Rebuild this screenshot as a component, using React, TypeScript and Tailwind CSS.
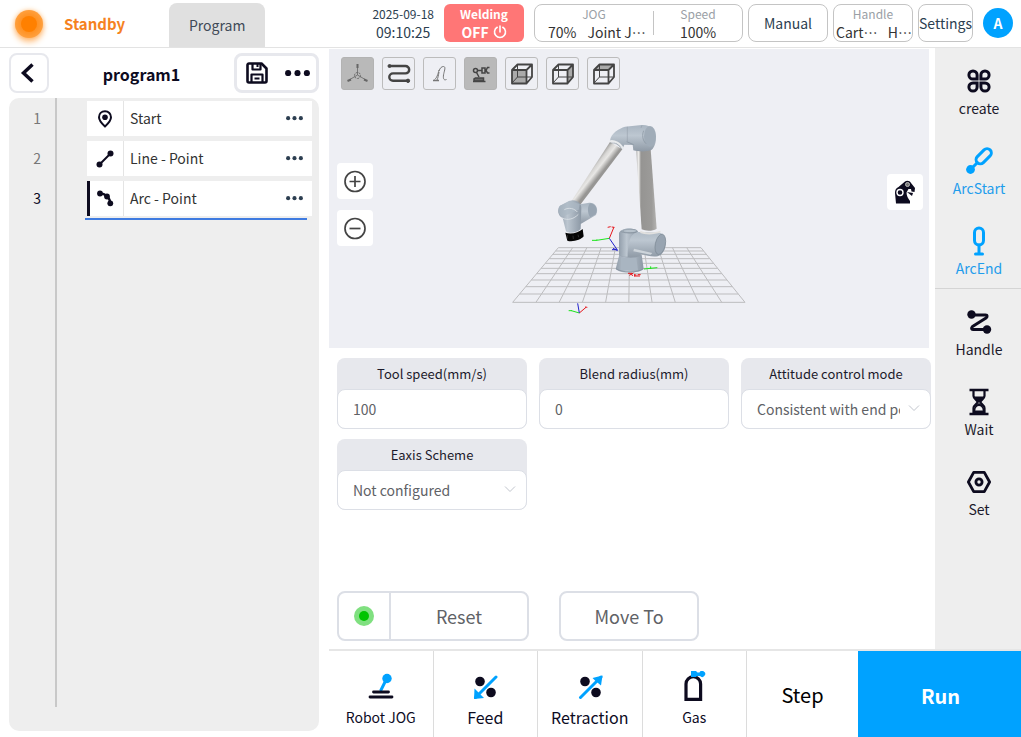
import type { ReactNode } from "react";

const INK = "#0d0b1f";
const BLUE = "#00a2ff";

const steps = [
  { id: 1, name: "Start", icon: <PinIcon />, active: false },
  { id: 2, name: "Line - Point", icon: <LineIcon />, active: false },
  { id: 3, name: "Arc - Point", icon: <ArcIcon />, active: true },
];

const viewTools = [
  { label: "Axes", icon: <AxesIcon />, active: true },
  { label: "Path", icon: <PathIcon />, active: false },
  { label: "Trace", icon: <TraceIcon />, active: false },
  { label: "Model", icon: <ArmIcon />, active: true },
  { label: "Front view", icon: <CubeIcon face="front" />, active: false },
  { label: "Right view", icon: <CubeIcon face="right" />, active: false },
  { label: "Top view", icon: <CubeIcon face="top" />, active: false },
];

function PinIcon() {
  return (
    <svg width="16" height="18" viewBox="0 0 16 18" fill="none">
      <path d="M8 1.3c-3.5 0-6 2.6-6 6 0 3.600 3 6.500 6 9.200 3-2.700 6-5.600 6-9.200 0-3.400-2.500-6-6-6z" stroke={INK} strokeWidth="2" />
      <circle cx="8" cy="7.300" r="2.800" fill={INK} />
    </svg>
  );
}

function LineIcon() {
  return (
    <svg width="18" height="18" viewBox="0 0 18 18">
      <path d="M3.500 14.500 14.500 3.500" stroke={INK} strokeWidth="2" />
      <circle cx="3.500" cy="14.500" r="3" fill={INK} />
      <circle cx="14.500" cy="3.500" r="3" fill={INK} />
    </svg>
  );
}

function ArcIcon() {
  return (
    <svg width="18" height="18" viewBox="0 0 18 18" fill="none">
      <path d="M4 3.500C9 3.500 14 7 14.300 13.500" stroke={INK} strokeWidth="2.500" />
      <circle cx="4" cy="3.500" r="2.900" fill={INK} />
      <circle cx="11" cy="6.500" r="2.900" fill={INK} />
      <circle cx="14.300" cy="13.300" r="2.900" fill={INK} />
    </svg>
  );
}

function DotsIcon({ size, color }: { size: number; color: string }) {
  return (
    <svg width={size} height={size / 4} viewBox="0 0 24 6" fill={color}>
      <circle cx="3" cy="3" r="2.900" />
      <circle cx="12" cy="3" r="2.900" />
      <circle cx="21" cy="3" r="2.900" />
    </svg>
  );
}

function SaveIcon() {
  return (
    <svg width="22" height="22" viewBox="0 0 22 22" fill="none" stroke={INK} strokeWidth="2.600" strokeLinejoin="round">
      <path d="M3 1.500h12.500l5 5V19a1.500 1.500 0 0 1-1.500 1.500H3A1.500 1.500 0 0 1 1.500 19V3A1.500 1.500 0 0 1 3 1.500z" />
      <path d="M6.500 1.500v6h8v-6M5.500 20.500v-8h11v8" strokeWidth="2.200" />
      <path d="M11.500 2v3M8.500 16.500h5" strokeWidth="2" />
    </svg>
  );
}

function AxesIcon() {
  return (
    <svg width="23" height="23" viewBox="0 0 23 23" fill="none" stroke="#666" strokeWidth="1">
      <path d="M11.500 13V4M11.500 13 3 18M11.500 13l8.500 5" strokeWidth=".8" />
      <circle cx="11.500" cy="13.500" r="3" strokeDasharray="2 1" />
      <path d="M11.500 2v4M1.500 19l3.500-1.500M21.500 19 18 17.500" strokeWidth="2" />
    </svg>
  );
}

function PathIcon() {
  return (
    <svg width="24" height="21" viewBox="0 0 24 21" fill="none" stroke="#444" strokeWidth="2.400">
      <path d="M3 3h15.500a3.700 3.700 0 0 1 0 7.400H6a3.700 3.700 0 0 0 0 7.400h15" />
      <circle cx="2.500" cy="3" r="1.500" fill="#444" strokeWidth="1" />
      <circle cx="21" cy="17.800" r="1.700" fill="#444" strokeWidth="1" />
    </svg>
  );
}

function TraceIcon() {
  return (
    <svg width="18" height="18" viewBox="0 0 18 18" fill="none" stroke="#777" strokeWidth="1">
      <path d="M2 15.500h6" strokeWidth="1.500" />
      <path d="M3.500 14.500c2-1 3.500-5 4.500-9.500M6 15c1-2 1.500-5 2-8" />
      <path d="M8 6c1-3 2.500-4.500 4.500-4.500 2.500 0 1 4 .3 7-.8 3.500-.8 7.500 2.700 6" />
    </svg>
  );
}

function ArmIcon() {
  return (
    <svg width="18" height="18" viewBox="0 0 18 18" fill="none" stroke="#444" strokeWidth="1.500">
      <circle cx="3.500" cy="5.500" r="2" />
      <path d="M5.500 5.500H10M4.500 7.500 7 12" />
      <path d="M10 3v5h3V3zM17.500 2.500h-2l-1.500 3 1.500 2.500h2" />
      <path d="M3.500 13h8v3H2v-2z" fill="#666" />
      <path d="M1 16.500h12.500" />
    </svg>
  );
}

function CubeIcon({ face }: { face: "front" | "right" | "top" }) {
  const faces = {
    front: "M2 8h14.500v13H2z",
    right: "M16.500 8 22 2.500V15l-5.500 6z",
    top: "M2 8l5.500-5.500H22L16.500 8z",
  };
  return (
    <svg width="24" height="24" viewBox="0 0 24 24" fill="none" stroke="#444" strokeWidth="1.800" strokeLinejoin="round">
      <path d={faces[face]} fill="#aaa" stroke="none" />
      <path d="M2 21 7.500 15H22M7.500 15V2.500" strokeWidth="1" />
      <path d="M2 8h14.500v13.500H2zM2 8l5.500-5.500H22L16.500 8M22 2.500V15l-5.500 6.500" />
    </svg>
  );
}

function CreateIcon() {
  return (
    <svg width="24" height="24" viewBox="0 0 24 24" fill="none" stroke={INK} strokeWidth="3">
      <path d="M10.100 10.100V6A4.100 4.100 0 1 0 6 10.100zM13.900 10.100V6A4.100 4.100 0 1 1 18 10.100zM10.100 13.900V18A4.100 4.100 0 1 1 6 13.900zM13.900 13.900V18A4.100 4.100 0 1 0 18 13.900z" />
    </svg>
  );
}

function ArcStartIcon() {
  return (
    <svg width="28" height="28" viewBox="0 0 28 28" fill="none" stroke={BLUE} strokeWidth="3">
      <rect x="9.700" y="5" width="18" height="8.500" rx="4.250" transform="rotate(-45 18.700 9.250)" />
      <path d="M6 22l7-7" />
      <circle cx="5.500" cy="22.500" r="4.400" fill={BLUE} stroke="none" />
    </svg>
  );
}

function ArcEndIcon() {
  return (
    <svg width="14" height="30" viewBox="0 0 14 30" fill="none" stroke={BLUE} strokeWidth="3" strokeLinecap="round">
      <rect x="2.500" y="2" width="9" height="17" rx="4.500" />
      <path d="M7 19v8M3.500 28h7" />
    </svg>
  );
}

function HandleIcon() {
  return (
    <svg width="26" height="26" viewBox="0 0 26 26" fill="none" stroke={INK} strokeWidth="3" strokeLinejoin="round">
      <path d="M5 6h14.500c2 0 2 2 .5 3L6.500 17.500C5 19 5.500 20.500 7 20.500h14" />
      <circle cx="5.500" cy="5.500" r="4.200" fill={INK} stroke="none" />
      <circle cx="21" cy="20.500" r="4.200" fill={INK} stroke="none" />
    </svg>
  );
}

function WaitIcon() {
  return (
    <svg width="20" height="28" viewBox="0 0 20 28" fill="none" stroke={INK} strokeWidth="2.200">
      <path d="M.5 2h19M.5 26h19" strokeWidth="2.600" />
      <path d="M4.500 3v5c0 3 4 4 4 6s-4 3-4 6v5M15.500 3v5c0 3-4 4-4 6s4 3 4 6v5" />
      <path d="M4.500 8.500h11c-.5 3-3.500 3.500-4 6h-3C8 12 5 11.500 4.500 8.500zM4 26v-4l3-5 3-2 3 2 3 5v4z" fill={INK} stroke="none" />
      <path d="M6.300 22.500c0-6 7.400-6 7.400 0z" fill="#eee" stroke="none" />
    </svg>
  );
}

function SetIcon() {
  return (
    <svg width="24" height="24" viewBox="0 0 24 24" fill="none" stroke={INK} strokeWidth="2.800" strokeLinejoin="round">
      <path d="M6.700 2.300h10.600L22.600 12l-5.300 9.700H6.700L1.400 12z" />
      <circle cx="12" cy="12" r="3.100" />
    </svg>
  );
}

function JogIcon() {
  return (
    <svg width="28" height="28" viewBox="0 0 28 28" fill="none" strokeLinecap="round">
      <path d="M18.500 8 14 17" stroke={BLUE} strokeWidth="3" />
      <circle cx="20" cy="5.500" r="4.700" fill={BLUE} />
      <path d="M6.500 19h15M3 24h22" stroke={INK} strokeWidth="2.800" />
    </svg>
  );
}

function WireIcon({ out }: { out?: boolean }) {
  return (
    <svg width="26" height="26" viewBox="0 0 26 26" strokeLinecap="round">
      <circle cx="8" cy="7.500" r="4.800" fill={INK} />
      <circle cx="19" cy="18.500" r="4.800" fill={INK} />
      <path d="M3.500 23.500 24 3" stroke={BLUE} strokeWidth="3" />
      {out ? (
        <path d="m15.500 4 10-2.500-1.500 10-3-2.500-3-2.500z" fill={BLUE} />
      ) : (
        <path d="m2 25 .5-10.500 3 3L9 21l3 3z" fill={BLUE} />
      )}
    </svg>
  );
}

function GasIcon() {
  return (
    <svg width="24" height="32" viewBox="0 0 24 32" fill="none">
      <path d="M4 28.300V13a7.300 7.300 0 0 1 14.600 0v15.300z" stroke={INK} strokeWidth="3.200" />
      <path d="M9 0h5l1.500 1.500h2A3 3 0 1 1 18 5h-3l-1 1H9z" fill={BLUE} />
    </svg>
  );
}

function TorchIcon() {
  return (
    <svg width="22" height="24" viewBox="0 0 22 24">
      <path d="M2 23.500 1 13c0-3 1-5 3.500-6L11 1.500c2-1.500 5-.5 6 1.500l4 5-.5 4-3-.5-.5-2.500-2.500 0-2 3.500c0 3 1.500 6 3.500 8.500v2.500z" fill={INK} />
      <path d="m13 12 6 1-1 3z" fill={INK} />
      <circle cx="6" cy="12.500" r="3" fill={INK} stroke="#fff" strokeWidth="1.400" />
      <circle cx="13.500" cy="4.500" r="2" fill="#777" stroke="#bbb" />
    </svg>
  );
}

function PowerIcon() {
  return (
    <svg width="14" height="14" viewBox="0 0 14 14" fill="none" stroke="#fff" strokeWidth="1.600" strokeLinecap="round">
      <path d="M7 1v6M4.200 2.300a5.500 5.500 0 1 0 5.600 0" />
    </svg>
  );
}

function ZoomIcon({ plus }: { plus?: boolean }) {
  return (
    <svg width="24" height="24" viewBox="0 0 24 24" fill="none" stroke="#444" strokeWidth="1.700">
      <circle cx="12" cy="12.500" r="10" />
      <path d={plus ? "M6.500 12.500h11M12 7v11" : "M6.500 12.500h11"} />
    </svg>
  );
}

const gridRows = [413, 423, 433, 446, 460, 475, 491, 510, 530, 552, 577];

function RobotScene() {
  return (
    <svg className="absolute inset-0 size-full" viewBox="0 0 600 299" role="img" aria-label="Robot model">
      <defs>
        <linearGradient id="upright" x1="408" y1="0" x2="470" y2="0" gradientUnits="userSpaceOnUse">
          <stop offset="0" stopColor="#b5b5b5" />
          <stop offset=".13" stopColor="#efeeec" />
          <stop offset=".24" stopColor="#959492" />
          <stop offset=".75" stopColor="#9c9b99" />
          <stop offset="1" stopColor="#b4b3b1" />
        </linearGradient>
        <linearGradient id="forearm" x1="268" y1="170" x2="300" y2="195" gradientUnits="userSpaceOnUse">
          <stop offset="0" stopColor="#8f8e8c" />
          <stop offset=".35" stopColor="#d6d5d3" />
          <stop offset=".6" stopColor="#e8e7e5" />
          <stop offset="1" stopColor="#979694" />
        </linearGradient>
        <linearGradient id="shell" x1="0" y1="0" x2="0" y2="1">
          <stop offset="0" stopColor="#a9b5c1" />
          <stop offset=".4" stopColor="#bdc7d1" />
          <stop offset="1" stopColor="#8e99a5" />
        </linearGradient>
        <linearGradient id="shellSide" x1="0" y1="0" x2="1" y2="0">
          <stop offset="0" stopColor="#929eab" />
          <stop offset=".4" stopColor="#bcc6d0" />
          <stop offset="1" stopColor="#8c98a5" />
        </linearGradient>
      </defs>
      <g transform="translate(171 61) scale(.33333)">
        <g stroke="#bcbcbe" strokeWidth="3">
          {gridRows.map((y) => {
            const t = (y - 413) / 164;
            return <line key={y} x1={175 - 137 * t} x2={603 + 132 * t} y1={y} y2={y} />;
          })}
          {gridRows.map((y, i) => (
            <line key={y} x1={175 + 42.8 * i} x2={38 + 69.7 * i} y1="413" y2="577" />
          ))}
        </g>
        {/* upper arm and elbow */}
        <path d="M408 118h44l18 238c-12 8-32 8-45 2z" fill="url(#upright)" />
        <path d="m330 96 37 22-125 165c-10 6-22 2-29-8z" fill="url(#forearm)" />
        <path d="M330 92c3-23 27-36 45-42l50-5c26-2 43 14 43 38 0 19-7 33-16 38-14 5-38 4-52 0l-2-16-25-1-6 14c-9-13-22-22-37-26z" fill="url(#shell)" />
        <ellipse cx="450" cy="79" rx="18" ry="31" fill="#a0acb8" />
        <path d="M431 62c-5 12-4 29 7 39m-58-6 21 9" stroke="#84909c" strokeWidth="2" fill="none" />
        <path d="M329 94c13-4 35 7 40 24" stroke="#e9ebed" strokeWidth="6" fill="none" />
        <path d="M329 100c13-4 30 4 36 18" stroke="#7f8992" strokeWidth="1.500" fill="none" />
        <path d="M382 50v44M426 46l-3 8" stroke="#8d98a4" strokeWidth="1.500" fill="none" />
        {/* wrist */}
        <path d="m240 283 24-4c19-4 30 12 27 27l-3 9-46 27-28-30z" fill="url(#shell)" />
        <path d="M270 280c-9 11-8 30 1 42l16-9c7-12 4-30-17-33z" fill="#98a5b2" />
        <path d="m180 287 28-14c18-8 38 6 36 22l-2 62c-12 12-33 15-44 7l-10-40c-15-7-17-26-8-37z" fill="url(#shellSide)" />
        <path d="m178 289 30-17 31 10-3 17-51 22c-10-8-12-22-7-32z" fill="#adb9c5" opacity=".7" />
        <path d="M187 324c16 9 36 2 48-11M193 299c14-8 31-3 39 7" stroke="#dce2e7" strokeWidth="2.500" fill="none" />
        <path d="M196 368c17 6 40 0 52-11l3 22c-6 10-35 19-49 13z" fill="#050505" />
        <path d="M202 375v11m17-9 1 10m14-13 2 8" stroke="#555" strokeWidth="1.500" />
        {/* base */}
        <path d="M358 434h67l6 43c-12 14-72 15-84 0z" fill="url(#shellSide)" />
        <path d="M363 443h46l5 38h-52z" fill="#a9b5c1" />
        <path d="M348 476c20 13 62 14 82 0" stroke="#7e8b97" strokeWidth="2" fill="none" />
        <path d="M357 370c4-18 50-19 58-4l65 2c21 8 24 47 3 66-16 11-38 3-60-1l-4 6c-16 6-48 6-62-4z" fill="url(#shell)" />
        <path d="M357 370c8-18 45-19 57-5-24 8-29 25-31 75-10 1-20 0-26-5z" fill="url(#shellSide)" />
        <ellipse cx="481" cy="403" rx="15" ry="31" transform="rotate(12 481 403)" fill="#98a4b1" stroke="#7b8793" strokeWidth="2" />
        <path d="m402 416 55 13-5 5-52-10z" fill="#cdd4da" />
        <path d="M421 362c14 7 42 7 60 0l1 5c-18 8-48 8-61 2z" fill="#e1e0de" />
        <ellipse cx="390" cy="363" rx="22" ry="5" fill="#b7c2cc" stroke="#7c8894" strokeWidth="1.500" />
        <path d="M362 364c7 5 35 8 48 1" stroke="#85919d" strokeWidth="2" fill="none" />
        {/* coordinate frames */}
        <g fill="none" strokeWidth="3">
          <path d="m328 385 14-34m-19 1 9-2m3 1 8 1M238 609l20-17m-3-1 7 1" stroke="#e5161c" />
          <path d="m328 385-38 6m-14 0h13m2-3-3 5M238 609l-24-7m-8 0h10M432 477l40-4m-20-4v8" stroke="#1be41b" />
          <path d="m328 385 22 32m-14 2h17m-14-4 14 7M238 609l-5-29" stroke="#2020cc" />
          <path d="M384 490h12m-8 6 12-7m-7 1 5 8m6-6v7m0-4h5m4-1h9m-20 4h18" stroke="#e5161c" />
        </g>
      </g>
    </svg>
  );
}

function Field({ label, id, children }: { label: string; id: string; children: ReactNode }) {
  return (
    <div className="min-w-0 rounded-lg bg-[#e7e8ed]">
      <label htmlFor={id} className="flex h-[31px] items-center justify-center text-[13px] text-[#1c1a2b]">
        {label}
      </label>
      {children}
    </div>
  );
}

function SelectField({ label, id, value }: { label: string; id: string; value: string }) {
  return (
    <Field label={label} id={id}>
      <div className="relative">
        <select id={id} className="block h-10 w-full appearance-none rounded-lg border border-[#dcdfe6] bg-white pl-[15px] pr-[30px] text-sm text-[#606266]">
          <option>{value}</option>
        </select>
        <svg className="pointer-events-none absolute right-[11px] top-4 text-[#c0c4cc]" width="12" height="7" viewBox="0 0 12 7" fill="none" stroke="currentColor">
          <path d="m1 .5 5 5 5-5" />
        </svg>
      </div>
    </Field>
  );
}

function InputField({ label, id, value }: { label: string; id: string; value: string }) {
  return (
    <Field label={label} id={id}>
      <input id={id} defaultValue={value} className="block h-10 w-full rounded-lg border border-[#dcdfe6] bg-white px-[15px] text-sm text-[#606266]" />
    </Field>
  );
}

function SideItem({ label, icon, blue }: { label: string; icon: ReactNode; blue?: boolean }) {
  return (
    <button className="flex h-20 w-full flex-col items-center pl-0.5 pt-[18px]">
      <span className="flex h-[30px] items-center">{icon}</span>
      <span className={blue ? "text-sm leading-6 text-[#1f9dec]" : "text-sm leading-6 text-[#1c1a2b]"}>{label}</span>
    </button>
  );
}

function FooterItem({ label, icon, large }: { label: string; icon: ReactNode; large?: boolean }) {
  return (
    <button className="flex flex-1 flex-col items-center border-r border-[#dcdcdc] pt-5 text-[#0d0b1f]">
      <span className="flex h-8 items-center">{icon}</span>
      <span className={large ? "text-base leading-7" : "text-sm leading-7"}>{label}</span>
    </button>
  );
}

function Header() {
  return (
    <header className="flex h-12 shrink-0 items-center border-b border-[#e3e3e3] pr-2 text-[#2c3e50]">
      <span className="ml-[15px] flex size-7 items-center justify-center rounded-full bg-[#ffa548] shadow-[0_4px_6px_#ffc58a]">
        <span className="size-4 rounded-full bg-[#ff8000] shadow-[0_0_6px_4px_#ff9020]" />
      </span>
      <span className="ml-[21px] pt-0.5 text-[15px] font-bold text-[#f5821f]">Standby</span>
      <button className="ml-11 h-11 w-24 self-end rounded-t-lg bg-[#e0e0e0] text-sm text-[#3f4a57]">Program</button>
      <div className="mb-px ml-auto flex items-center gap-[5px]">
        <div className="mr-[5px] text-center">
          <p className="text-xs leading-[18px]">2025-09-18</p>
          <p className="text-sm leading-[18px]">09:10:25</p>
        </div>
        <button className="mr-[5px] flex h-[38px] w-20 flex-col items-center rounded-md bg-[#ff7676] font-bold text-white">
          <span className="text-xs leading-5">Welding</span>
          <span className="flex items-center gap-1 text-sm leading-4">
            OFF <PowerIcon />
          </span>
        </button>
        <div className="flex h-[38px] w-[209px] items-center rounded-lg border border-[#c4c4c4] text-center">
          <button className="w-[118px]">
            <span className="block text-xs leading-[18px] text-[#9aa0a6]">JOG</span>
            <span className="flex gap-[11px] whitespace-nowrap pl-[13px] text-sm leading-[18px] text-[#333]">
              <span>70%</span>
              <span>Joint J…</span>
            </span>
          </button>
          <span className="h-6 w-px bg-[#c4c4c4]" />
          <button className="flex-1">
            <span className="block text-xs leading-[18px] text-[#9aa0a6]">Speed</span>
            <span className="block text-sm leading-[18px] text-[#333]">100%</span>
          </button>
        </div>
        <button className="h-[38px] w-20 rounded-lg border border-[#c4c4c4] text-sm">Manual</button>
        <button className="h-[38px] w-20 rounded-lg border border-[#c4c4c4]">
          <span className="block text-xs leading-[18px] text-[#9aa0a6]">Handle</span>
          <span className="flex justify-between pl-[2px] text-sm leading-[18px] text-[#333]">
            <span>Cart…</span>
            <span>H…</span>
          </span>
        </button>
        <button className="flex h-[38px] w-[55px] items-center justify-center rounded-lg border border-[#c4c4c4] text-sm">
          Settings
        </button>
        <button className="ml-[5px] size-[30px] rounded-full bg-[#00a2ff] text-sm font-bold text-white">A</button>
      </div>
    </header>
  );
}

function ProgramPanel() {
  return (
    <section className="flex w-[329px] shrink-0 flex-col pb-[6px] pl-[9px] pr-[10px] pt-[5px]">
      <div className="flex items-center justify-between">
        <button aria-label="Back" className="flex size-10 items-center justify-center rounded-lg border-2 border-[#e7e8ed]">
          <svg className="mr-1" width="14" height="20" viewBox="0 0 14 20" fill="none" stroke={INK} strokeWidth="3.500">
            <path d="M12.500 1.500 3.500 10l9 8.500" />
          </svg>
        </button>
        <h1 className="pt-0.5 text-base font-bold text-[#0d0b1f]">program1</h1>
        <div className="flex h-10 w-[85px] items-center justify-between rounded-lg border-[3px] border-[#e7e8ed] pl-[9px] pr-[6px]">
          <button aria-label="Save">
            <SaveIcon />
          </button>
          <button aria-label="More">
            <DotsIcon size={25} color={INK} />
          </button>
        </div>
      </div>
      <div className="mt-[5px] flex flex-1 rounded-[10px] bg-[#eee]">
        <ol className="mb-6 flex w-12 flex-col gap-[5px] border-r-2 border-[#c8c8c8] pr-[14px] pt-[3px] text-right text-sm leading-[35px] text-[#777]">
          {steps.map((step) => (
            <li key={step.id} className={step.active ? "text-[#0d0b1f]" : ""}>
              {step.id}
            </li>
          ))}
        </ol>
        <div className="flex-1 pl-[30px] pr-[7px] pt-[3px]">
          <ul className="flex flex-col gap-[5px]">
            {steps.map((step) => (
              <li key={step.id} className="relative flex h-[35px] items-center bg-white">
                {step.active && <span className="absolute inset-y-0 left-0 w-[3px] bg-[#0d0b1f]" />}
                <span className="flex h-full w-[37px] items-center justify-center border-r border-[#e4e4e4]">{step.icon}</span>
                <span className="flex-1 pb-0.5 pl-[6px] text-sm text-[#333]">{step.name}</span>
                <button aria-label={"More for " + step.name} className="mr-[9px]">
                  <DotsIcon size={17} color="#2c3e50" />
                </button>
              </li>
            ))}
          </ul>
          <div className="-ml-0.5 mr-[5px] mt-0.5 h-0.5 bg-[#3f7be0]" />
        </div>
      </div>
    </section>
  );
}

function Viewer() {
  return (
    <div className="relative mr-[6px] mt-px h-[299px] shrink-0 bg-[#eeeff4]">
      <RobotScene />
      <div className="relative flex gap-2 pl-3 pt-2">
        {viewTools.map((tool) => (
          <button
            key={tool.label}
            aria-label={tool.label}
            className={
              tool.active
                ? "flex size-[33px] items-center justify-center rounded-[3px] border border-[#b3b3b3] bg-[#b9b9b9]"
                : "flex size-[33px] items-center justify-center rounded-[3px] border border-[#bcbcbc]"
            }
          >
            {tool.icon}
          </button>
        ))}
      </div>
      <div className="absolute left-2 top-[114px] flex flex-col gap-[11px]">
        <button aria-label="Zoom in" className="flex size-9 items-center justify-center rounded bg-white">
          <ZoomIcon plus />
        </button>
        <button aria-label="Zoom out" className="flex size-9 items-center justify-center rounded bg-white">
          <ZoomIcon />
        </button>
      </div>
      <button aria-label="Posture" className="absolute right-[6px] top-[125px] flex size-9 items-center justify-center rounded bg-white">
        <TorchIcon />
      </button>
    </div>
  );
}

export default function App() {
  return (
    <div lang="zh-CN" className="flex h-screen flex-col bg-white font-['Noto_Sans_CJK_SC',sans-serif]">
      <Header />
      <div className="flex min-h-0 flex-1">
        <ProgramPanel />
        <div className="flex min-w-0 flex-1 flex-col">
          <div className="flex min-h-0 flex-1">
            <main className="flex min-w-0 flex-1 flex-col">
              <Viewer />
              <div className="grid grid-cols-3 gap-x-3 gap-y-[10px] pl-2 pr-1 pt-[10px]">
                <InputField id="speed" label="Tool speed(mm/s)" value="100" />
                <InputField id="blend" label="Blend radius(mm)" value="0" />
                <SelectField id="attitude" label="Attitude control mode" value="Consistent with end point" />
                <SelectField id="eaxis" label="Eaxis Scheme" value="Not configured" />
              </div>
              <div className="mb-2 mt-auto flex gap-[30px] pl-2 text-lg text-[#606266]">
                <div className="flex h-[50px] w-48 rounded-lg border-2 border-[#dcdfe6]">
                  <span className="flex w-[52px] items-center justify-center border-r-2 border-[#dcdfe6]">
                    <span className="flex size-5 items-center justify-center rounded-full bg-[#80e080]">
                      <span className="size-[10px] rounded-full bg-[#00c400]" />
                    </span>
                  </span>
                  <button className="flex-1">Reset</button>
                </div>
                <button className="h-[50px] w-[140px] rounded-lg border-2 border-[#dcdfe6]">Move To</button>
              </div>
            </main>
            <aside className="w-[86px] shrink-0 bg-[#eee]">
              <SideItem label="create" icon={<CreateIcon />} />
              <SideItem label="ArcStart" icon={<ArcStartIcon />} blue />
              <SideItem label="ArcEnd" icon={<ArcEndIcon />} blue />
              <div className="border-t border-[#d4d4d4]">
                <SideItem label="Handle" icon={<HandleIcon />} />
                <SideItem label="Wait" icon={<WaitIcon />} />
                <SideItem label="Set" icon={<SetIcon />} />
              </div>
            </aside>
          </div>
          <footer className="flex h-[88px] shrink-0 border-t-2 border-[#e6e6e6]">
            <FooterItem label="Robot JOG" icon={<JogIcon />} />
            <FooterItem label="Feed" icon={<WireIcon />} large />
            <FooterItem label="Retraction" icon={<WireIcon out />} large />
            <FooterItem label="Gas" icon={<GasIcon />} />
            <button className="w-[111px] pt-0.5 text-xl text-black">Step</button>
            <button className="w-[163px] bg-[#00a2ff] pl-0.5 pt-1 text-xl font-bold text-white">Run</button>
          </footer>
        </div>
      </div>
    </div>
  );
}
